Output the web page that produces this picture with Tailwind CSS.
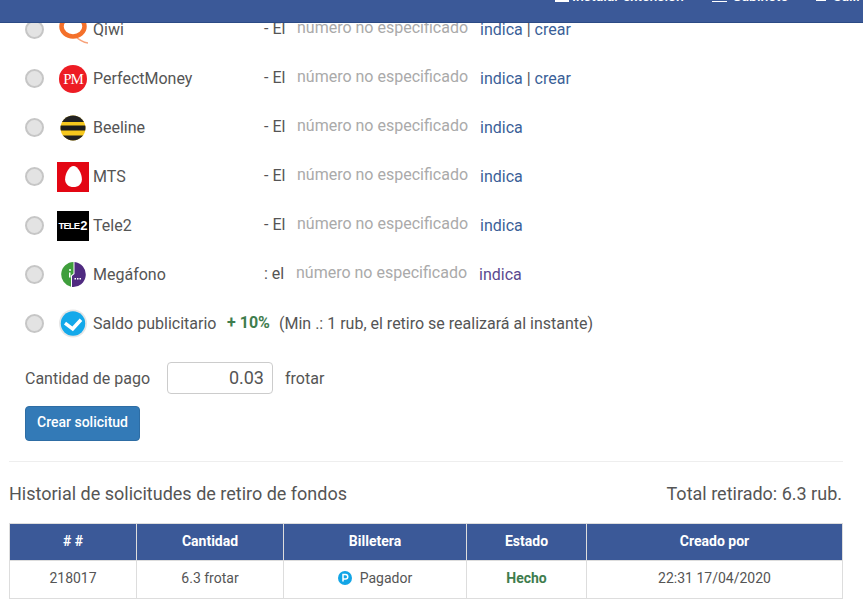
<!DOCTYPE html>
<html lang="es">
<head>
<meta charset="utf-8">
<script src="https://cdn.jsdelivr.net/npm/@tailwindcss/browser@4"></script>
<title>Retiro</title>
</head>
<body class="bg-white font-['Roboto',sans-serif] text-[16px] text-[#555] h-[609px] w-[863px] overflow-hidden relative">
<header class="absolute top-0 left-0 w-full h-[23px] bg-[#3b5998] border-b border-[#2b4a85] z-10 overflow-hidden flex justify-end items-end text-white text-[14px] font-medium leading-none pb-[19px]">
  <div class="flex items-center w-[308px] shrink-0">
    <svg class="w-[14px] h-[12px] mr-[3px]" viewBox="0 0 14 12"><rect width="14" height="12" fill="#fff"/></svg>
    <span class="w-[140px] whitespace-nowrap">Instalar extensión</span>
    <svg class="w-[15px] h-[12px] mr-[5px]" viewBox="0 0 15 12"><path d="M0 11.500h15" stroke="#fff"/><rect x="1" width="13" height="9" fill="none" stroke="#fff"/></svg>
    <span class="w-[84px] whitespace-nowrap">Gabinete</span>
    <svg class="w-[14px] h-[12px] mr-[3px]" viewBox="0 0 14 12"><rect width="10" height="11" fill="#fff"/></svg>
    <span class="whitespace-nowrap">Salir</span>
  </div>
</header>

<main class="pt-[5px]">
  <ul class="flex flex-col">
    <li class="flex items-center h-[49px] pl-[25px]">
      <span class="w-[19px] h-[19px] rounded-full bg-[#e3e3e3] border-2 border-[#c6c6c6] shrink-0 mr-[13px]"></span>
      <span class="w-[32px] h-[32px] shrink-0 mr-[4px] flex items-center justify-center">
        <svg width="30" height="30" viewBox="0 0 30 30"><path d="M17 21q6 6 13 7" fill="none" stroke="#f7a27a" stroke-width="1.500"/><ellipse cx="15" cy="11.500" rx="11.500" ry="10" fill="none" stroke="#f4702a" stroke-width="4.500"/></svg>
      </span>
      <span class="w-[171px] shrink-0">Qiwi</span>
      <span class="w-[33px] shrink-0 -translate-y-px">- El</span>
      <span class="w-[183px] shrink-0 text-[#aaa] -translate-y-[2px]">número no especificado</span>
      <span class="text-[#3b5f98]">indica <span class="text-[#555]">|</span> crear</span>
    </li>
    <li class="flex items-center h-[49px] pl-[25px]">
      <span class="w-[19px] h-[19px] rounded-full bg-[#e3e3e3] border-2 border-[#c6c6c6] shrink-0 mr-[13px]"></span>
      <span class="w-[32px] h-[32px] shrink-0 mr-[4px] flex items-center justify-center">
        <svg width="28" height="28" viewBox="0 0 28 28"><circle cx="14" cy="14" r="14" fill="#ed1c24"/><text x="14" y="19" text-anchor="middle" font-family="Liberation Serif" font-size="15" letter-spacing="-1" fill="#fff">PM</text></svg>
      </span>
      <span class="w-[171px] shrink-0">PerfectMoney</span>
      <span class="w-[33px] shrink-0 -translate-y-px">- El</span>
      <span class="w-[183px] shrink-0 text-[#aaa] -translate-y-[2px]">número no especificado</span>
      <span class="text-[#3b5f98]">indica <span class="text-[#555]">|</span> crear</span>
    </li>
    <li class="flex items-center h-[49px] pl-[25px]">
      <span class="w-[19px] h-[19px] rounded-full bg-[#e3e3e3] border-2 border-[#c6c6c6] shrink-0 mr-[13px]"></span>
      <span class="w-[32px] h-[32px] shrink-0 mr-[4px] flex items-center justify-center">
        <svg width="26" height="26" viewBox="0 0 26 26"><defs><clipPath id="bee"><circle cx="13" cy="13" r="12.500"/></clipPath></defs><g clip-path="url(#bee)"><rect width="26" height="26" fill="#f6c81e"/><rect width="26" height="7" fill="#222"/><rect y="10.500" width="26" height="5" fill="#1c1c1c"/><rect y="20.500" width="26" height="6" fill="#222"/></g></svg>
      </span>
      <span class="w-[171px] shrink-0">Beeline</span>
      <span class="w-[33px] shrink-0 -translate-y-px">- El</span>
      <span class="w-[183px] shrink-0 text-[#aaa] -translate-y-[2px]">número no especificado</span>
      <span class="text-[#3b5f98]">indica</span>
    </li>
    <li class="flex items-center h-[49px] pl-[25px]">
      <span class="w-[19px] h-[19px] rounded-full bg-[#e3e3e3] border-2 border-[#c6c6c6] shrink-0 mr-[13px]"></span>
      <span class="w-[32px] h-[30px] shrink-0 mr-[4px] bg-[#e30613] flex items-center justify-center">
        <svg width="17" height="21" viewBox="0 0 16 20"><path d="M8 0C12 0 16 7 16 12.500 16 17 12.500 20 8 20S0 17 0 12.500C0 7 4 0 8 0z" fill="#fff"/></svg>
      </span>
      <span class="w-[171px] shrink-0">MTS</span>
      <span class="w-[33px] shrink-0 -translate-y-px">- El</span>
      <span class="w-[183px] shrink-0 text-[#aaa] -translate-y-[2px]">número no especificado</span>
      <span class="text-[#3b5f98]">indica</span>
    </li>
    <li class="flex items-center h-[49px] pl-[25px]">
      <span class="w-[19px] h-[19px] rounded-full bg-[#e3e3e3] border-2 border-[#c6c6c6] shrink-0 mr-[13px]"></span>
      <span class="w-[32px] h-[30px] shrink-0 mr-[4px] bg-black flex items-center justify-center text-white font-['Liberation_Sans',sans-serif] font-bold text-[9.500px] leading-none tracking-[-0.9px]">TELE<span class="text-[13px] tracking-normal ml-px">2</span></span>
      <span class="w-[171px] shrink-0">Tele2</span>
      <span class="w-[33px] shrink-0 -translate-y-px">- El</span>
      <span class="w-[183px] shrink-0 text-[#aaa] -translate-y-[2px]">número no especificado</span>
      <span class="text-[#3b5f98]">indica</span>
    </li>
    <li class="flex items-center h-[49px] pl-[25px]">
      <span class="w-[19px] h-[19px] rounded-full bg-[#e3e3e3] border-2 border-[#c6c6c6] shrink-0 mr-[13px]"></span>
      <span class="w-[32px] h-[32px] shrink-0 mr-[4px] flex items-center justify-center">
        <svg width="25" height="25" viewBox="0 0 25 25"><path d="M12.500 0A12.500 12.500 0 0 0 10 24.700V13.500L12.500 11.500z" fill="#3f9e3c"/><path d="M13.500 0A12.500 12.500 0 0 1 11 24.900V14L13.500 12z" fill="#4f2a80"/><circle cx="9" cy="8" r="1" fill="#fff"/><path d="M8 10.500h1.500v5H8z" fill="#fff"/><path d="M13.500 16h1.500v1.500h-1.500zM16 16h1.500v1.500H16zM18.500 16h1.500v1.500h-1.500z" fill="#fff"/></svg>
      </span>
      <span class="w-[171px] shrink-0">Megáfono</span>
      <span class="w-[32px] shrink-0 -translate-y-px">: el</span>
      <span class="w-[183px] shrink-0 text-[#aaa] -translate-y-[2px]">número no especificado</span>
      <span class="text-[#5b4a8f]">indica</span>
    </li>
    <li class="flex items-center h-[49px] pl-[25px]">
      <span class="w-[19px] h-[19px] rounded-full bg-[#e3e3e3] border-2 border-[#c6c6c6] shrink-0 mr-[13px]"></span>
      <span class="w-[32px] h-[32px] shrink-0 mr-[4px] flex items-center justify-center">
        <svg width="30" height="30" viewBox="0 0 30 30"><circle cx="15" cy="14.500" r="14" fill="#e6e6e6"/><circle cx="15" cy="14.500" r="12.200" fill="#14a9ea"/><path d="M7 14.200l7.700 5.600L23 10.800" fill="none" stroke="#fff" stroke-width="3.500"/></svg>
      </span>
      <span class="w-[134px] shrink-0 whitespace-nowrap">Saldo publicitario</span>
      <span class="w-[52px] shrink-0 font-bold text-[#3f7d4e] -translate-y-px">+ 10%</span>
      <span>(Min .: 1 rub, el retiro se realizará al instante)</span>
    </li>
  </ul>

  <div class="flex items-center mt-[14px] pl-[25px] h-[32px]">
    <label class="w-[142px] shrink-0 translate-y-px">Cantidad de pago</label>
    <input class="w-[106px] h-[32px] border border-[#ccc] rounded-[4px] text-right pl-[8px] pr-[8px] pb-[2px] text-[18px] text-[#555] outline-none" value="0.03">
    <span class="ml-[12px] translate-y-px">frotar</span>
  </div>

  <button class="block ml-[25px] mt-[12px] w-[115px] h-[35px] pb-[2px] bg-[#337ab7] border border-[#2e6da4] rounded-[4px] text-white text-[14px] font-medium">Crear solicitud</button>

  <hr class="mt-[20px] ml-[9px] mr-[20px] border-t border-[#eee]">

  <div class="flex justify-between items-center mt-[19px] ml-[9px] mr-[21px] h-[24px] text-[18px]">
    <h2 class="font-normal">Historial de solicitudes de retiro de fondos</h2>
    <span>Total retirado: 6.3 rub.</span>
  </div>

  <table class="mt-[18px] ml-[9px] w-[834px] border-collapse table-fixed text-[14px] text-center">
    <thead>
      <tr class="h-[37px] bg-[#3b5998] text-white font-bold">
        <th class="w-[127px] border border-[#ddd] pb-[2px]"># #</th>
        <th class="w-[147px] border border-[#ddd] pb-[2px]">Cantidad</th>
        <th class="w-[183px] border border-[#ddd] pb-[2px]">Billetera</th>
        <th class="w-[120px] border border-[#ddd] pb-[2px]">Estado</th>
        <th class="border border-[#ddd] pb-[2px]">Creado por</th>
      </tr>
    </thead>
    <tbody>
      <tr class="h-[38px]">
        <td class="border border-[#ddd] pb-[2px]">218017</td>
        <td class="border border-[#ddd] pb-[2px]">6.3 frotar</td>
        <td class="border border-[#ddd]">
          <span class="inline-flex items-center gap-[8px]">
            <svg width="14" height="14" viewBox="0 0 14 14"><circle cx="7" cy="7" r="7" fill="#12a5e6"/><path d="M5 10.500V3.500h2.500a2 2 0 0 1 0 4.500H5" fill="none" stroke="#fff" stroke-width="1.500"/></svg>
            Pagador
          </span>
        </td>
        <td class="border border-[#ddd] pb-[2px] font-bold text-[#3f7d4e]">Hecho</td>
        <td class="border border-[#ddd] pb-[2px]">22:31 17/04/2020</td>
      </tr>
    </tbody>
  </table>
</main>
</body>
</html>
